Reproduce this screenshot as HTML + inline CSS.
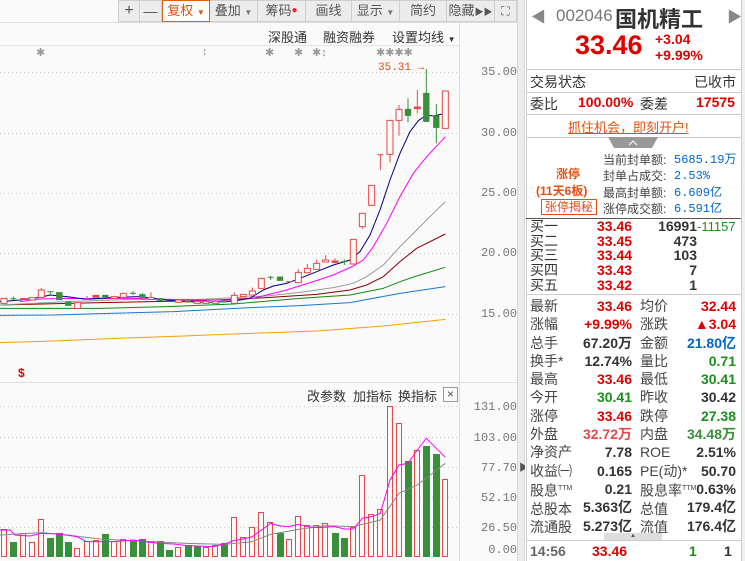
<!DOCTYPE html>
<html><head><meta charset="utf-8"><style>
*{margin:0;padding:0;box-sizing:border-box}
body{width:745px;height:561px;overflow:hidden;background:#fafafa;font-family:"Liberation Sans","Noto Sans CJK SC",sans-serif;position:relative}
.a{position:absolute;white-space:nowrap}
.btn{position:absolute;top:0;height:22px;background:#ececec;border:1px solid #cfcfcf;border-left:none;font-size:13px;color:#555;text-align:center;line-height:20px}
.r{color:#e00000}.g{color:#1a8f1a}.b{color:#0066cc}
.ax{position:absolute;left:470px;width:55px;text-align:right;font-family:"Liberation Mono",monospace;font-size:12px;color:#777}
</style></head><body>
<div class="a" style="left:0;top:0;width:517px;height:23px;background:#fafafa;border-bottom:1px solid #ddd"></div>
<div class="btn" style="left:118px;width:22px;border-left:1px solid #cfcfcf;font-size:16px">+</div>
<div class="btn" style="left:140px;width:22px;font-size:14px">—</div>
<div class="btn" style="left:162px;width:48px;background:#fff;border:1px solid #e06010;color:#e05010">复权 <span style="font-size:8px">▼</span></div>
<div class="btn" style="left:210px;width:48px">叠加 <span style="font-size:8px;color:#777">▼</span></div>
<div class="btn" style="left:258px;width:48px">筹码<span style="color:#f22;font-size:10px;vertical-align:top">●</span></div>
<div class="btn" style="left:306px;width:46px">画线</div>
<div class="btn" style="left:352px;width:48px">显示 <span style="font-size:8px;color:#777">▼</span></div>
<div class="btn" style="left:400px;width:47px">简约</div>
<div class="btn" style="left:447px;width:48px">隐藏<span style="font-size:9px">▶▶</span></div>
<div class="btn" style="left:495px;width:22px;font-size:12px">⛶</div>
<div class="a" style="left:268px;top:27px;font-size:13px;color:#333">深股通</div>
<div class="a" style="left:323px;top:27px;font-size:13px;color:#333">融资融券</div>
<div class="a" style="left:392px;top:27px;font-size:13px;color:#333">设置均线 <span style="font-size:8px">▼</span></div>
<div class="a" style="left:0;top:45px;width:459px;border-top:1px solid #e6e6e6"></div>
<div class="a" style="left:36px;top:46px;font-size:11px;color:#999">✱</div>
<div class="a" style="left:202px;top:46px;font-size:11px;color:#999">↕</div>
<div class="a" style="left:265px;top:46px;font-size:11px;color:#999">✱</div>
<div class="a" style="left:294px;top:46px;font-size:11px;color:#999">✱</div>
<div class="a" style="left:312px;top:46px;font-size:11px;color:#999">✱↕</div>
<div class="a" style="left:376px;top:46px;font-size:11px;color:#999">✱✱✱✱</div>
<div class="a" style="left:378px;top:62px;font-size:11px;color:#e05010;font-family:'Liberation Mono',monospace">35.31 →</div>
<div class="a" style="left:18px;top:366px;font-size:12px;color:#e00;font-weight:bold">$</div>
<div class="a" style="left:459px;top:23px;height:538px;border-left:1px solid #ddd"></div>
<div class="a" style="left:517px;top:0;width:8px;height:561px;background:#ececec;border-left:1px solid #d6d6d6;border-right:1px solid #d6d6d6"></div>
<div class="a" style="left:519px;top:459px;font-size:10px;color:#555">▶</div>
<div class="ax" style="top:65px;left:462px">35.00</div>
<div class="ax" style="top:126px;left:462px">30.00</div>
<div class="ax" style="top:186px;left:462px">25.00</div>
<div class="ax" style="top:246px;left:462px">20.00</div>
<div class="ax" style="top:307px;left:462px">15.00</div>
<div class="ax" style="top:400px;left:462px">131.00</div>
<div class="ax" style="top:431px;left:462px">103.00</div>
<div class="ax" style="top:461px;left:462px">77.70</div>
<div class="ax" style="top:491px;left:462px">52.10</div>
<div class="ax" style="top:521px;left:462px">26.50</div>
<div class="ax" style="top:543px;left:462px">0.00</div>
<div class="a" style="left:0;top:382px;width:517px;border-top:1px solid #ddd"></div>
<div class="a" style="left:307px;top:386px;font-size:13px;color:#333">改参数</div>
<div class="a" style="left:353px;top:386px;font-size:13px;color:#333">加指标</div>
<div class="a" style="left:398px;top:386px;font-size:13px;color:#333">换指标</div>
<div class="a" style="left:443px;top:387px;width:15px;height:15px;border:1px solid #999;font-size:12px;line-height:13px;text-align:center;color:#555">×</div>

<svg class="a" style="left:0;top:0" width="459" height="561">
<g stroke="#ccc" stroke-dasharray="1,3" stroke-width="1">
<line x1="0" y1="72.5" x2="459" y2="72.5"/><line x1="0" y1="133.5" x2="459" y2="133.5"/><line x1="0" y1="193.5" x2="459" y2="193.5"/><line x1="0" y1="253.5" x2="459" y2="253.5"/><line x1="0" y1="314.5" x2="459" y2="314.5"/>
<line x1="0" y1="406.5" x2="459" y2="406.5"/><line x1="0" y1="437.5" x2="459" y2="437.5"/><line x1="0" y1="467.5" x2="459" y2="467.5"/><line x1="0" y1="497.5" x2="459" y2="497.5"/><line x1="0" y1="527.5" x2="459" y2="527.5"/>
</g>
<g transform="translate(0,60) scale(0.33333)" fill="none" stroke-width="1">
<polyline vector-effect="non-scaling-stroke" stroke="#f5a000" points="0,848 160,843 350,835 550,828 750,820 950,813 1150,798 1336,778"/>
<polyline vector-effect="non-scaling-stroke" stroke="#1a78d0" points="0,766 160,765 330,760 520,755 750,743 900,737 1050,728 1200,700 1336,680"/>
<polyline vector-effect="non-scaling-stroke" stroke="#118811" points="0,745 300,745 500,740 700,732 900,715 1050,705 1150,685 1200,665 1250,648 1336,622"/>
<polyline vector-effect="non-scaling-stroke" stroke="#8b0000" points="0,735 300,728 600,722 800,713 950,703 1050,690 1100,675 1150,650 1200,605 1250,565 1336,522"/>
<polyline vector-effect="non-scaling-stroke" stroke="#999" points="0,735 200,725 400,718 600,718 800,708 900,697 1000,683 1060,670 1100,650 1150,615 1200,560 1250,510 1300,460 1336,425"/>
<polyline vector-effect="non-scaling-stroke" stroke="#ff00ff" points="60,725 120,717 200,715 300,716 400,715 500,718 600,720 700,720 760,715 800,705 860,690 940,665 1000,645 1060,618 1090,600 1120,560 1160,490 1200,410 1240,340 1280,290 1336,230"/>
<polyline vector-effect="non-scaling-stroke" stroke="#000080" points="0,725 60,720 120,712 150,705 200,710 260,718 340,712 420,710 500,720 560,725 620,727 680,725 720,720 750,715 790,690 820,678 860,670 900,655 950,635 1000,615 1050,600 1080,575 1110,525 1140,450 1170,360 1200,280 1230,215 1255,182 1280,165 1300,168 1336,160"/>
<line vector-effect="non-scaling-stroke" stroke="#3a8f3a" x1="1279" y1="27" x2="1279" y2="185"/>
<g stroke="#e84848">
<rect vector-effect="non-scaling-stroke" x="3" y="715" width="18" height="15" fill="#fafafa"/>
<line vector-effect="non-scaling-stroke" x1="60" y1="717" x2="78" y2="717" stroke-width="2"/>
<rect vector-effect="non-scaling-stroke" x="88" y="713" width="18" height="7" fill="#fafafa"/>
<line vector-effect="non-scaling-stroke" x1="124" y1="684" x2="124" y2="690"/><rect vector-effect="non-scaling-stroke" x="115" y="690" width="18" height="22" fill="#fafafa"/>
<rect vector-effect="non-scaling-stroke" x="224" y="728" width="18" height="17" fill="#fafafa"/>
<line vector-effect="non-scaling-stroke" x1="261" y1="708" x2="261" y2="720"/><line vector-effect="non-scaling-stroke" x1="252" y1="718" x2="270" y2="718"/>
<rect vector-effect="non-scaling-stroke" x="279" y="706" width="18" height="6" fill="#e84848"/>
<rect vector-effect="non-scaling-stroke" x="333" y="710" width="18" height="5" fill="#fafafa"/>
<rect vector-effect="non-scaling-stroke" x="361" y="700" width="18" height="12" fill="#fafafa"/>
<line vector-effect="non-scaling-stroke" x1="453" y1="697" x2="453" y2="712"/><rect vector-effect="non-scaling-stroke" x="444" y="712" width="18" height="6" fill="#fafafa"/>
<rect vector-effect="non-scaling-stroke" x="527" y="720" width="18" height="7" fill="#fafafa"/>
<rect vector-effect="non-scaling-stroke" x="583" y="724" width="18" height="6" fill="#fafafa"/>
<rect vector-effect="non-scaling-stroke" x="609" y="724" width="18" height="6" fill="#fafafa"/>
<rect vector-effect="non-scaling-stroke" x="637" y="724" width="18" height="6" fill="#fafafa"/>
<line vector-effect="non-scaling-stroke" x1="703" y1="697" x2="703" y2="706"/><rect vector-effect="non-scaling-stroke" x="694" y="706" width="18" height="24" fill="#fafafa"/>
<rect vector-effect="non-scaling-stroke" x="721" y="703" width="18" height="7" fill="#fafafa"/>
<line vector-effect="non-scaling-stroke" x1="757" y1="683" x2="757" y2="693"/><rect vector-effect="non-scaling-stroke" x="748" y="693" width="18" height="12" fill="#fafafa"/>
<rect vector-effect="non-scaling-stroke" x="775" y="655" width="18" height="30" fill="#fafafa"/>
<line vector-effect="non-scaling-stroke" x1="858" y1="665" x2="876" y2="665"/>
<line vector-effect="non-scaling-stroke" x1="895" y1="628" x2="895" y2="637"/><rect vector-effect="non-scaling-stroke" x="886" y="637" width="18" height="31" fill="#fafafa"/>
<line vector-effect="non-scaling-stroke" x1="922" y1="612" x2="922" y2="625"/><rect vector-effect="non-scaling-stroke" x="913" y="625" width="18" height="13" fill="#fafafa"/>
<line vector-effect="non-scaling-stroke" x1="950" y1="598" x2="950" y2="610"/><rect vector-effect="non-scaling-stroke" x="941" y="610" width="18" height="18" fill="#fafafa"/>
<line vector-effect="non-scaling-stroke" x1="977" y1="585" x2="977" y2="600"/><rect vector-effect="non-scaling-stroke" x="968" y="600" width="18" height="6" fill="#fafafa"/>
<line vector-effect="non-scaling-stroke" x1="1005" y1="595" x2="1005" y2="610"/><rect vector-effect="non-scaling-stroke" x="996" y="603" width="18" height="4" fill="#e84848"/>
<rect vector-effect="non-scaling-stroke" x="1051" y="538" width="18" height="74" fill="#fafafa"/>
<line vector-effect="non-scaling-stroke" x1="1087" y1="500" x2="1087" y2="506"/><rect vector-effect="non-scaling-stroke" x="1078" y="460" width="18" height="40" fill="#fafafa"/>
<rect vector-effect="non-scaling-stroke" x="1106" y="376" width="18" height="60" fill="#fafafa"/>
<line vector-effect="non-scaling-stroke" x1="1141" y1="284" x2="1141" y2="330"/><line vector-effect="non-scaling-stroke" x1="1132" y1="284" x2="1150" y2="284"/>
<line vector-effect="non-scaling-stroke" x1="1170" y1="283" x2="1170" y2="307"/><rect vector-effect="non-scaling-stroke" x="1161" y="181" width="18" height="102" fill="#fafafa"/>
<line vector-effect="non-scaling-stroke" x1="1197" y1="135" x2="1197" y2="227"/><rect vector-effect="non-scaling-stroke" x="1188" y="148" width="18" height="33" fill="#fafafa"/>
<line vector-effect="non-scaling-stroke" x1="1252" y1="90" x2="1252" y2="160"/><rect vector-effect="non-scaling-stroke" x="1243" y="141" width="18" height="5" fill="#e84848"/>
<rect vector-effect="non-scaling-stroke" x="1327" y="93" width="18" height="112" fill="#fafafa"/>
</g>
<g stroke="#3a8f3a" fill="#3a8f3a">
<line vector-effect="non-scaling-stroke" x1="31" y1="716" x2="49" y2="716"/><line vector-effect="non-scaling-stroke" x1="40" y1="710" x2="40" y2="720"/>
<line vector-effect="non-scaling-stroke" x1="142" y1="695" x2="160" y2="695"/><line vector-effect="non-scaling-stroke" x1="151" y1="695" x2="151" y2="705"/>
<rect x="169" y="697" width="18" height="23"/><rect x="196" y="725" width="18" height="12"/>
<rect x="307" y="705" width="18" height="6"/>
<line vector-effect="non-scaling-stroke" x1="390" y1="700" x2="408" y2="700"/><line vector-effect="non-scaling-stroke" x1="399" y1="693" x2="399" y2="705"/>
<rect x="418" y="703" width="18" height="10"/><line vector-effect="non-scaling-stroke" x1="427" y1="700" x2="427" y2="720"/>
<rect x="472" y="715" width="18" height="7"/><rect x="555" y="722" width="18" height="5"/><rect x="664" y="722" width="18" height="5"/>
<line vector-effect="non-scaling-stroke" x1="803" y1="652" x2="821" y2="652"/><line vector-effect="non-scaling-stroke" x1="812" y1="647" x2="812" y2="660"/>
<rect x="831" y="650" width="18" height="12"/>
<line vector-effect="non-scaling-stroke" x1="1024" y1="605" x2="1042" y2="605"/><line vector-effect="non-scaling-stroke" x1="1033" y1="598" x2="1033" y2="615"/>
<line vector-effect="non-scaling-stroke" x1="1224" y1="115" x2="1224" y2="187"/><rect x="1215" y="147" width="18" height="20"/>
<rect x="1270" y="99" width="18" height="86"/>
<line vector-effect="non-scaling-stroke" x1="1309" y1="132" x2="1309" y2="250"/><rect x="1300" y="167" width="18" height="36"/>
</g>
</g>
<g fill="#fafafa" stroke="#e84848" stroke-width="1">
<rect x="1.5" y="529.5" width="5" height="27"/><rect x="20.5" y="533.5" width="5" height="23"/><rect x="29.5" y="542.5" width="5" height="14"/><rect x="38.5" y="519.5" width="5" height="37"/><rect x="74.5" y="548.5" width="5" height="8"/><rect x="84.5" y="541.5" width="5" height="15"/><rect x="93.5" y="540.5" width="5" height="16"/><rect x="111.5" y="541.5" width="5" height="15"/><rect x="120.5" y="539.5" width="5" height="17"/><rect x="148.5" y="541.5" width="5" height="15"/><rect x="175.5" y="547.5" width="5" height="9"/><rect x="203.5" y="547.5" width="5" height="9"/><rect x="212.5" y="545.5" width="5" height="11"/><rect x="231.5" y="517.5" width="5" height="39"/><rect x="240.5" y="537.5" width="5" height="19"/><rect x="249.5" y="527.5" width="5" height="29"/><rect x="258.5" y="512.5" width="5" height="44"/><rect x="267.5" y="522.5" width="5" height="34"/><rect x="286.5" y="539.5" width="5" height="17"/><rect x="295.5" y="516.5" width="5" height="40"/><rect x="304.5" y="525.5" width="5" height="31"/><rect x="313.5" y="525.5" width="5" height="31"/><rect x="322.5" y="523.5" width="5" height="33"/><rect x="350.5" y="527.5" width="5" height="29"/><rect x="359.5" y="475.5" width="5" height="81"/><rect x="368.5" y="514.5" width="5" height="42"/><rect x="377.5" y="509.5" width="5" height="47"/><rect x="387.5" y="406.5" width="5" height="150"/><rect x="396.5" y="423.5" width="5" height="133"/><rect x="414.5" y="450.5" width="5" height="106"/><rect x="442.5" y="479.5" width="5" height="77"/>
</g>
<g fill="#3a8f3a">
<rect x="10" y="542" width="7" height="15"/><rect x="47" y="538" width="7" height="19"/><rect x="56" y="533" width="7" height="24"/><rect x="65" y="542" width="7" height="15"/><rect x="102" y="534" width="7" height="23"/><rect x="130" y="541" width="7" height="16"/><rect x="139" y="539" width="7" height="18"/><rect x="157" y="541" width="7" height="16"/><rect x="166" y="550" width="7" height="7"/><rect x="185" y="545" width="7" height="12"/><rect x="194" y="546" width="7" height="11"/><rect x="221" y="543" width="7" height="14"/><rect x="277" y="533" width="7" height="24"/><rect x="332" y="533" width="7" height="24"/><rect x="341" y="538" width="7" height="19"/><rect x="405" y="461" width="7" height="96"/><rect x="423" y="446" width="7" height="111"/><rect x="433" y="454" width="7" height="103"/>
</g>
<g transform="translate(0,380) scale(0.33333)" fill="none">
<polyline vector-effect="non-scaling-stroke" stroke="#888" points="0,465 124,458 200,465 300,477 450,485 560,490 673,493 757,485 812,463 895,448 977,437 1060,440 1141,420 1197,340 1252,315 1336,250"/>
<polyline vector-effect="non-scaling-stroke" stroke="#ff00ff" points="0,450 30,450 45,465 90,468 124,460 178,462 230,470 260,485 345,485 400,480 450,487 480,490 520,492 560,497 640,500 675,492 700,482 730,477 757,470 785,450 812,430 840,438 867,440 895,433 922,440 950,443 1005,440 1033,447 1060,447 1087,415 1115,410 1141,400 1170,300 1197,255 1224,250 1252,210 1279,175 1309,205 1336,232"/>
</g>
</svg>

<div class="a" style="left:525px;top:0;width:220px;height:561px;background:#fff;border-right:4px solid #f0f0f0"></div>
<div class="a" style="left:526px;top:0;height:561px;border-left:1px solid #ccc"></div>
<div class="a" style="left:741px;top:0;height:561px;border-left:1px solid #ccc"></div>
<div class="a" style="left:531px;top:6px;font-size:15px;color:#888">◀</div>
<div class="a" style="left:727px;top:6px;font-size:15px;color:#888">▶</div>
<div class="a" style="left:556px;top:6px;font-size:17px;color:#777">002046</div>
<div class="a" style="left:615px;top:2px;font-size:22px;font-weight:bold;color:#333">国机精工</div>
<div class="a r" style="left:575px;top:30px;font-size:27px;font-weight:bold">33.46</div>
<div class="a r" style="left:655px;top:31px;font-size:14px;font-weight:bold">+3.04</div>
<div class="a r" style="left:655px;top:47px;font-size:14px;font-weight:bold">+9.99%</div>
<div class="a" style="left:526px;top:69px;width:215px;border-top:1px solid #ccc"></div>
<div class="a" style="left:530px;top:72px;font-size:14px;color:#333">交易状态</div>
<div class="a" style="left:694px;top:72px;font-size:14px;color:#333">已收市</div>
<div class="a" style="left:526px;top:92px;width:215px;border-top:1px solid #ccc"></div>
<div class="a" style="left:530px;top:94px;font-size:14px;color:#333">委比</div>
<div class="a r" style="left:578px;top:94px;font-size:14px;font-weight:bold">100.00%</div>
<div class="a" style="left:640px;top:94px;font-size:14px;color:#333">委差</div>
<div class="a r" style="left:696px;top:94px;font-size:14px;font-weight:bold">17575</div>
<div class="a" style="left:526px;top:114px;width:215px;border-top:1px solid #ccc"></div>
<div class="a" style="left:568px;top:117px;font-size:13px;color:#e05010;text-decoration:underline">抓住机会，即刻开户!</div>
<div class="a" style="left:526px;top:137px;width:215px;border-top:1px solid #ccc"></div>
<svg class="a" style="left:608px;top:137px" width="50" height="11"><polygon points="0,0 50,0 44,11 6,11" fill="#999"/><polyline points="21,8 25,4 29,8" fill="none" stroke="#fff"/></svg>
<div class="a" style="left:556px;top:165px;font-size:12px;font-weight:bold;color:#e05010">涨停</div>
<div class="a" style="left:536px;top:182px;font-size:12px;font-weight:bold;color:#e05010">(11天6板)</div>
<div class="a" style="left:541px;top:199px;width:56px;height:16px;border:1px solid #e05010;font-size:12px;color:#e05010;line-height:14px;text-align:center">张停揭秘</div>
<div class="a" style="left:603px;top:152px;font-size:12px;color:#444;line-height:16.3px">当前封单额:<br>封单占成交:<br>最高封单额:<br>涨停成交额:</div>
<div class="a b" style="left:674px;top:152px;font-size:12px;line-height:16.3px;font-family:'Liberation Mono','Noto Sans CJK SC',monospace">5685.19万<br>2.53%<br>6.609亿<br>6.591亿</div>
<div class="a" style="left:526px;top:218px;width:215px;border-top:1px solid #555"></div>
<div class="a" style="left:530px;top:219px;font-size:14px;color:#333;line-height:14.7px">买一<br>买二<br>买三<br>买四<br>买五</div>
<div class="a r" style="left:597px;top:219px;font-size:14px;font-weight:bold;line-height:14.7px">33.46<br>33.45<br>33.44<br>33.43<br>33.42</div>
<div class="a" style="right:48px;top:219px;font-size:14px;font-weight:bold;color:#333;line-height:14.7px;text-align:right">16991<br>473<br>103<br>7<br>1</div>
<div class="a g" style="left:697px;top:219px;font-size:13px">-11157</div>
<div class="a" style="left:526px;top:294px;width:215px;border-top:1px solid #ccc"></div>
<div class="a" style="left:530px;top:297px;font-size:14px;color:#444;line-height:18.3px">最新<br>涨幅<br>总手<br>换手*<br>最高<br>今开<br>涨停<br>外盘<br>净资产<br>收益㈠<br>股息<sup style="font-size:7px">TTM</sup><br>总股本<br>流通股</div>
<div class="a" style="left:640px;top:297px;font-size:14px;color:#444;line-height:18.3px">均价<br>涨跌<br>金额<br>量比<br>最低<br>昨收<br>跌停<br>内盘<br>ROE<br>PE(动)*<br>股息率<sup style="font-size:7px">TTM</sup><br>总值<br>流值</div>
<div class="a" style="right:113px;top:297px;font-size:14px;font-weight:bold;line-height:18.3px;text-align:right;color:#333"><span class="r">33.46</span><br><span class="r">+9.99%</span><br>67.20万<br>12.74%<br><span class="r">33.46</span><br><span class="g">30.41</span><br><span class="r">33.46</span><br><span style="color:#e84848">32.72万</span><br>7.78<br>0.165<br>0.21<br>5.363亿<br>5.273亿</div>
<div class="a" style="right:9px;top:297px;font-size:14px;font-weight:bold;line-height:18.3px;text-align:right;color:#333"><span class="r">32.44</span><br><span class="r">▲3.04</span><br><span class="b">21.80亿</span><br><span class="g">0.71</span><br><span class="g">30.41</span><br>30.42<br><span class="g">27.38</span><br><span style="color:#3a8f3a">34.48万</span><br>2.51%<br>50.70<br>0.63%<br>179.4亿<br>176.4亿</div>
<div class="a" style="left:604px;top:533px;width:58px;height:7px;background:#ddd;font-size:6px;line-height:7px;text-align:center;color:#555">▲</div>
<div class="a" style="left:526px;top:540px;width:215px;border-top:1px solid #ccc"></div>
<div class="a" style="left:530px;top:543px;font-size:14px;color:#666;font-weight:bold">14:56</div>
<div class="a r" style="left:592px;top:543px;font-size:14px;font-weight:bold">33.46</div>
<div class="a g" style="left:689px;top:543px;font-size:14px;font-weight:bold">1</div>
<div class="a" style="left:724px;top:543px;font-size:14px;font-weight:bold;color:#333">1</div>
</body></html>
